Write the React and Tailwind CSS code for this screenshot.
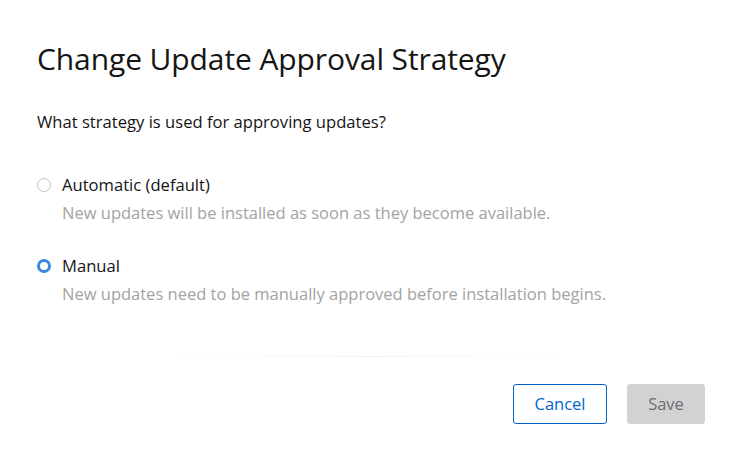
import React, { useState } from 'react';

const options = [
  {
    id: 'Automatic',
    label: 'Automatic (default)',
    desc: 'New updates will be installed as soon as they become available.',
  },
  {
    id: 'Manual',
    label: 'Manual',
    desc: 'New updates need to be manually approved before installation begins.',
  },
];

function Radio({ checked }) {
  return checked ? (
    <span className="block w-[14px] h-[14px] rounded-full border-[3.5px] border-[#3a87e0] bg-white shrink-0" />
  ) : (
    <span className="block w-[14px] h-[14px] rounded-full border border-[#c7c7c7] bg-white shrink-0" />
  );
}

export default function App() {
  const [strategy, setStrategy] = useState('Manual');

  return (
    <div className="w-[741px] h-[462px] bg-white flex flex-col text-[#151515]" style={{ fontFamily: '"Open Sans", sans-serif' }}>
      <div className="px-[37px] pt-[39px]">
        <h1 className="text-[30px] leading-[40px] font-normal tracking-[-0.1px]">Change Update Approval Strategy</h1>
        <p className="mt-[31px] text-[16.6px] leading-[24px]">What strategy is used for approving updates?</p>
        <div className="mt-[39px] flex flex-col gap-[29px]">
          {options.map((o) => (
            <label key={o.id} className="flex flex-col cursor-pointer" onClick={() => setStrategy(o.id)}>
              <div className="flex items-center gap-[11px]">
                <Radio checked={strategy === o.id} />
                <span className="text-[16.6px] leading-[24px]">{o.label}</span>
              </div>
              <span className="ml-[25px] mt-[4px] text-[16.5px] leading-[24px] text-[#a3a3a3]">{o.desc}</span>
            </label>
          ))}
        </div>
      </div>
      <div className="mt-auto mx-[160px] h-px bg-gradient-to-r from-transparent via-[#f3f3f3] to-transparent" />
      <div className="flex justify-end gap-[20px] px-[36px] pt-[27px] pb-[38px]">
        <button className="w-[94px] h-[40px] rounded-[3px] border border-[#0066cc] text-[#0066cc] text-[16.5px]">Cancel</button>
        <button className="w-[78px] h-[40px] rounded-[3px] bg-[#d2d2d2] text-[#6a6e73] text-[16.5px]">Save</button>
      </div>
    </div>
  );
}
